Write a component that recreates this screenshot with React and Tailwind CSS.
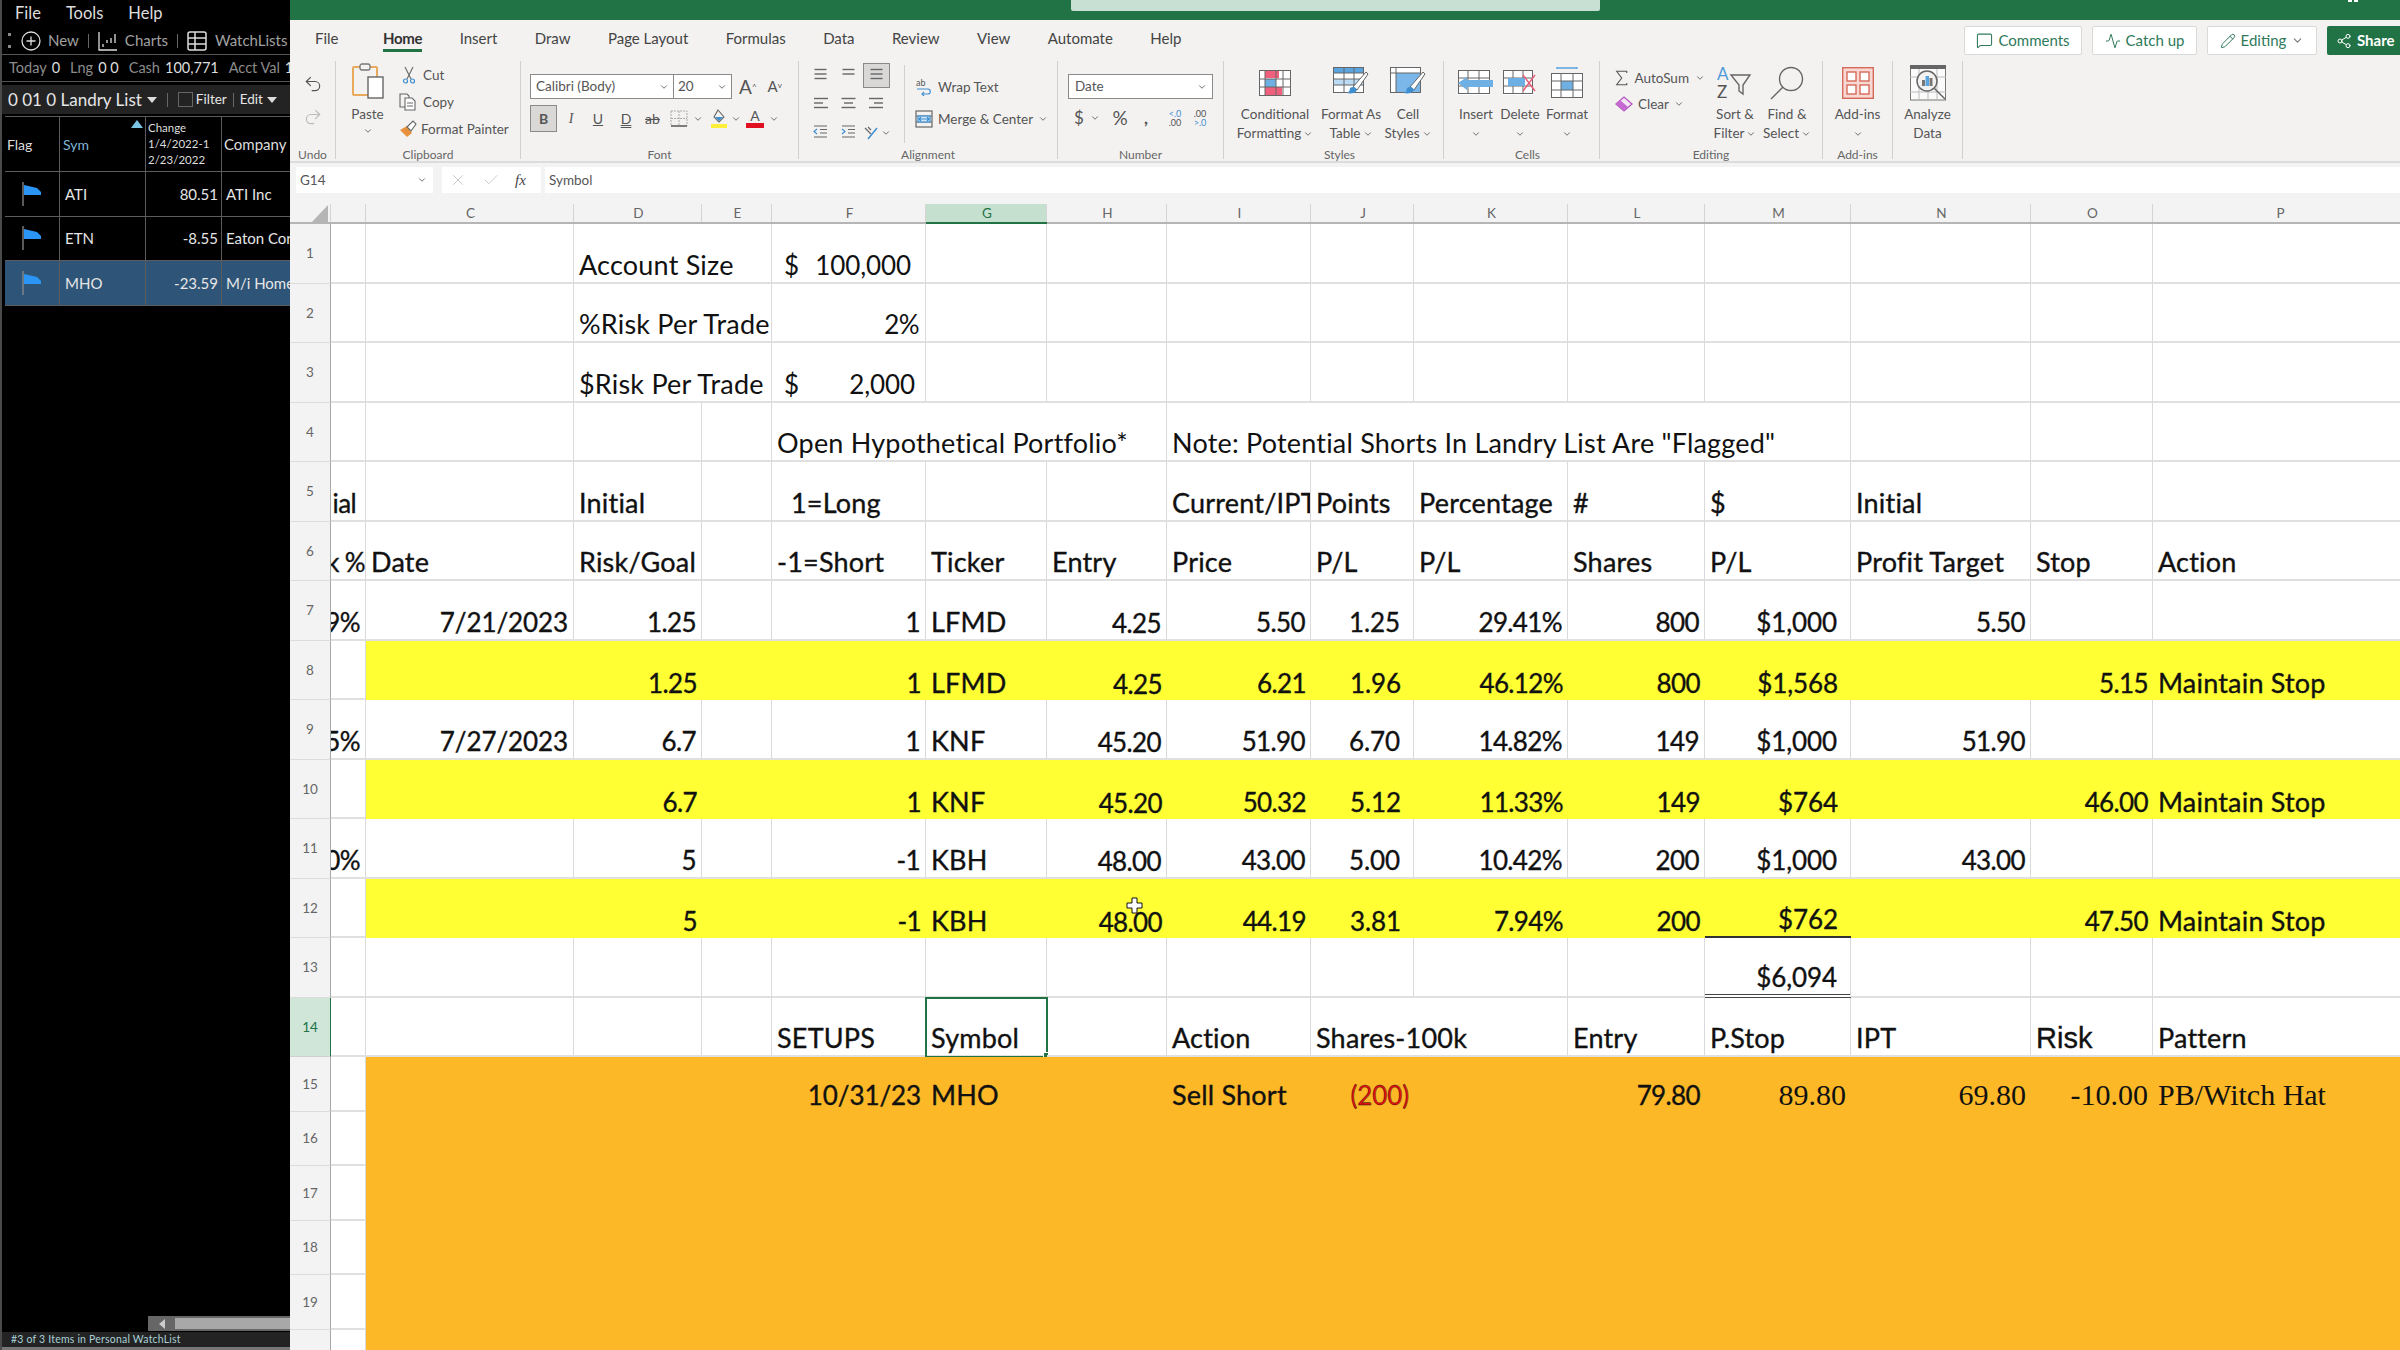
import { ChevronDown, MessageSquare, Activity, Pencil, Share2, Undo2, Redo2, X, Check } from 'lucide-react';

// ---------- sheet data ----------
const COLS = ['B', 'C', 'D', 'E', 'F', 'G', 'H', 'I', 'J', 'K', 'L', 'M', 'N', 'O', 'P'];
const HEADERS = [['C', 'w-[208px]'], ['D', 'w-[128px]'], ['E', 'w-[70px]'], ['F', 'w-[154px]'], ['G', 'w-[121px]'], ['H', 'w-[120px]'], ['I', 'w-[144px]'], ['J', 'w-[103px]'], ['K', 'w-[154px]'], ['L', 'w-[137px]'], ['M', 'w-[146px]'], ['N', 'w-[180px]'], ['O', 'w-[122px]'], ['P', 'w-[254px]']];
const GRID = 'grid grid-cols-[41px_35px_208px_128px_70px_154px_121px_120px_144px_103px_154px_137px_146px_180px_122px_254px]';

const r = (t, extra) => ({ t, right: true, ...extra });
const h = (t) => ({ t, low: true, right: true });
// points and $ columns sit further in from the cell edge
const m = (t, extra) => r(t, { wide: true, cls: 'pr-[13px]', ...extra });

const ROWS = [
    { n: 1, cells: { D: { t: 'Account Size', span: 2, thin: true }, F: { t: '100,000', dollar: true, thin: true, cls: 'pr-[14px] pl-[12px]' } } },
    { n: 2, cells: { D: { t: '%Risk Per Trade', span: 2, thin: true }, F: r('2%', { thin: true, cls: 'pr-[6px]' }) } },
    { n: 3, cells: { D: { t: '$Risk Per Trade', span: 2, thin: true }, F: { t: '2,000', dollar: true, thin: true, cls: 'pr-[10px] pl-[12px]' } } },
    { n: 4, cells: { F: { t: 'Open Hypothetical Portfolio*', span: 3, thin: true }, I: { t: 'Note: Potential Shorts In Landry List Are "Flagged"', span: 5, thin: true } } },
    { n: 5, cells: { B: { t: 'ial', right: true, cls: 'pr-[9px]' }, D: { t: 'Initial' }, F: { t: '1=Long', cls: 'pl-[19px]' }, I: { t: 'Current/IPT', cls: 'overflow-hidden' }, J: { t: 'Points' }, K: { t: 'Percentage' }, L: { t: '#' }, M: { t: '$' }, N: { t: 'Initial' } } },
    { n: 6, cells: { B: { t: 'k %', right: true, cls: 'pr-0' }, C: { t: 'Date' }, D: { t: 'Risk/Goal' }, F: { t: '-1=Short' }, G: { t: 'Ticker' }, H: { t: 'Entry' }, I: { t: 'Price' }, J: { t: 'P/L' }, K: { t: 'P/L' }, L: { t: 'Shares' }, M: { t: 'P/L' }, N: { t: 'Profit Target' }, O: { t: 'Stop' }, P: { t: 'Action' } } },
    { n: 7, cells: { B: r('9%'), C: r('7/21/2023', { wide: true }), D: r('1.25'), F: r('1'), G: { t: 'LFMD' }, H: h('4.25'), I: r('5.50'), J: m('1.25'), K: r('29.41%'), L: r('800'), M: m('$1,000'), N: r('5.50') } },
    { n: 8, fill: 'bg-[#ffff33]', cells: { D: r('1.25'), F: r('1'), G: { t: 'LFMD' }, H: h('4.25'), I: r('6.21'), J: m('1.96'), K: r('46.12%'), L: r('800'), M: m('$1,568'), O: r('5.15'), P: { t: 'Maintain Stop' } } },
    { n: 9, cells: { B: r('5%'), C: r('7/27/2023', { wide: true }), D: r('6.7'), F: r('1'), G: { t: 'KNF' }, H: h('45.20'), I: r('51.90'), J: m('6.70'), K: r('14.82%'), L: r('149'), M: m('$1,000'), N: r('51.90') } },
    { n: 10, fill: 'bg-[#ffff33]', cells: { D: r('6.7'), F: r('1'), G: { t: 'KNF' }, H: h('45.20'), I: r('50.32'), J: m('5.12'), K: r('11.33%'), L: r('149'), M: m('$764'), O: r('46.00'), P: { t: 'Maintain Stop' } } },
    { n: 11, cells: { B: r('0%'), D: r('5'), F: r('-1'), G: { t: 'KBH' }, H: h('48.00'), I: r('43.00'), J: m('5.00'), K: r('10.42%'), L: r('200'), M: m('$1,000'), N: r('43.00') } },
    { n: 12, fill: 'bg-[#ffff33]', cells: { D: r('5'), F: r('-1'), G: { t: 'KBH' }, H: h('48.00'), I: r('44.19'), J: m('3.81'), K: r('7.94%'), L: r('200'), M: m('$762', { cls: 'pr-[13px] border-b-2 !border-b-[#333]' }), O: r('47.50'), P: { t: 'Maintain Stop' } } },
    { n: 13, cells: { M: m('$6,094', { cls: 'pr-[13px] !border-b-[4px] !border-b-[#444] border-double' }) } },
    { n: 14, active: true, cells: { F: { t: 'SETUPS' }, G: { t: 'Symbol', selected: true }, I: { t: 'Action' }, J: { t: 'Shares-100k', span: 2 }, L: { t: 'Entry' }, M: { t: 'P.Stop' }, N: { t: 'IPT' }, O: { t: 'Risk', risk: true }, P: { t: 'Pattern' } } },
    { n: 15, short: true, fill: 'bg-[#fcb827]', cells: { F: r('10/31/23', { wide: true }), G: { t: 'MHO' }, I: { t: 'Sell Short' }, J: r('(200)', { wide: true, cls: 'text-[#e01010]' }), L: r('79.80'), M: r('89.80', { serif: true }), N: r('69.80', { serif: true }), O: r('-10.00', { serif: true }), P: { t: 'PB/Witch Hat', serif: true } } },
    { n: 16, short: true, fill: 'bg-[#fcb827]', cells: {} },
    { n: 17, short: true, fill: 'bg-[#fcb827]', cells: {} },
    { n: 18, short: true, fill: 'bg-[#fcb827]', cells: {} },
    { n: 19, short: true, fill: 'bg-[#fcb827]', cells: {} },
    { n: 20, short: true, fill: 'bg-[#fcb827]', cells: {} },
];

// ---------- ribbon icons ----------
const Chev = ({ className = '' }) => <ChevronDown size={10} strokeWidth={2} className={`text-[#555] shrink-0 ${className}`} />;

const PasteIcon = () => (
    <svg width="34" height="40" viewBox="0 0 34 40">
        <rect x="2" y="5" width="24" height="28" rx="1" fill="#f3f2f1" stroke="#e8a95c" strokeWidth="2" />
        <rect x="9" y="2" width="10" height="6" rx="2" fill="#f3f2f1" stroke="#777" strokeWidth="1.3" />
        <rect x="17" y="15" width="15" height="21" fill="#fff" stroke="#666" strokeWidth="1.4" />
    </svg>
);
const CutIcon = () => (
    <svg width="14" height="18" viewBox="0 0 14 18" fill="none">
        <path d="M3 1l6 12M11 1L5 13" stroke="#666" strokeWidth="1.1" />
        <circle cx="3.5" cy="15" r="2" stroke="#3f8ed0" strokeWidth="1.2" />
        <circle cx="10.5" cy="15" r="2" stroke="#3f8ed0" strokeWidth="1.2" />
    </svg>
);
const CopyIcon = () => (
    <svg width="18" height="18" viewBox="0 0 18 18" fill="none" stroke="#666" strokeWidth="1.1">
        <path d="M1 1h7l2 2v11H1z" fill="#f3f2f1" />
        <path d="M6 5h7l3 3v9H6z" fill="#fff" />
        <path d="M8 10h6M8 13h6" />
    </svg>
);
const PainterIcon = () => (
    <svg width="18" height="18" viewBox="0 0 18 18">
        <path d="M1 10l7-4 5 7-5 4z" fill="#e8913c" />
        <path d="M8 7l6-6 3 3-5 7z" fill="#fff" stroke="#666" strokeWidth="1.1" />
    </svg>
);
const GridLines = ({ w = 32, h = 26, xs = [], ys = [] }) => (
    <g stroke="#666" strokeWidth="1" fill="none">
        <rect x=".5" y=".5" width={w - 1} height={h - 1} />
        {xs.map((x) => <path key={`x${x}`} d={`M${x} 0v${h}`} />)}
        {ys.map((y) => <path key={`y${y}`} d={`M0 ${y}h${w}`} />)}
    </g>
);
const CondIcon = () => (
    <svg width="32" height="26" viewBox="0 0 32 26">
        <rect x="0" y="0" width="32" height="26" fill="#fff" />
        <rect x="6" y="0" width="14" height="8" fill="#f0607c" />
        <rect x="6" y="9" width="11" height="8" fill="#6fb0e4" />
        <rect x="6" y="17" width="17" height="9" fill="#f0607c" />
        <GridLines xs={[6, 17, 24]} ys={[9, 17]} />
    </svg>
);
const Brush = () => (
    <g>
        <path d="M20 20L33 5l2 2-11 16z" fill="#fff" stroke="#666" strokeWidth="1" />
        <path d="M17 21c3-2 6-1 7 2-1 3-6 4-10 3 2-1 3-3 3-5z" fill="#3f8ed0" />
    </g>
);
const TableIcon = () => (
    <svg width="36" height="32" viewBox="0 0 36 32">
        <rect x="0" y="0" width="31" height="26" fill="#fff" />
        <rect x="0" y="0" width="31" height="6" fill="#5aa4e0" />
        <rect x="0" y="12" width="31" height="6" fill="#bcdcf5" />
        <GridLines w={31} xs={[11, 21]} ys={[6, 12, 18]} />
        <Brush />
    </svg>
);
const StylesIcon = () => (
    <svg width="36" height="32" viewBox="0 0 36 32">
        <rect x="0" y="0" width="31" height="26" fill="#fff" />
        <rect x="6" y="6" width="25" height="20" fill="#7cb7ea" />
        <GridLines w={31} xs={[6]} ys={[6]} />
        <Brush />
    </svg>
);
const InsertIcon = () => (
    <svg width="36" height="26" viewBox="0 0 36 26">
        <rect x="0" y="1" width="32" height="24" fill="#fff" />
        <GridLines w={32} h={24} xs={[10, 21]} ys={[8, 16]} />
        <path d="M0 13l9-6v3h26v7H9v3z" fill="#6fb0e4" />
    </svg>
);
const DeleteIcon = () => (
    <svg width="34" height="26" viewBox="0 0 34 26">
        <rect x="0" y="1" width="30" height="24" fill="#fff" />
        <GridLines w={30} h={24} xs={[10, 20]} ys={[8, 16]} />
        <rect x="5" y="8" width="17" height="8" fill="#6fb0e4" />
        <path d="M20 5l12 16M32 5L20 21" stroke="#e7607a" strokeWidth="1.5" />
    </svg>
);
const FormatIcon = () => (
    <svg width="32" height="32" viewBox="0 0 32 32">
        <path d="M6 1h20M6 0v2M26 0v2" stroke="#5aa4e0" strokeWidth="1.3" />
        <g transform="translate(0 6)">
            <rect width="32" height="25" fill="#fff" />
            <rect x="10" y="8" width="12" height="9" fill="#6fb0e4" />
            <GridLines h={25} xs={[10, 22]} ys={[8, 17]} />
        </g>
    </svg>
);
const SortIcon = () => (
    <svg width="36" height="34" viewBox="0 0 36 34">
        <text x="0" y="14" fontSize="17" fill="#4f9bd9" fontFamily="Lato">A</text>
        <text x="0" y="32" fontSize="17" fill="#555" fontFamily="Lato">Z</text>
        <path d="M14 9h19l-7 10v9l-4-3v-6z" fill="none" stroke="#666" strokeWidth="1.4" />
    </svg>
);
const FindIcon = () => (
    <svg width="34" height="34" viewBox="0 0 34 34" fill="none" stroke="#666" strokeWidth="1.4">
        <circle cx="21" cy="13" r="11.5" />
        <path d="M13 21L1 33" />
    </svg>
);
const AddInsIcon = () => (
    <svg width="32" height="32" viewBox="0 0 32 32" fill="#fff" stroke="#d6695a" strokeWidth="1.4">
        <rect x=".7" y=".7" width="30.6" height="30.6" fill="#f7d8d2" />
        <rect x="5" y="5" width="9" height="9" />
        <rect x="18" y="5" width="9" height="9" />
        <rect x="5" y="18" width="9" height="9" />
        <rect x="18" y="18" width="9" height="9" />
    </svg>
);
const AnalyzeIcon = () => (
    <svg width="36" height="36" viewBox="0 0 36 36" fill="none">
        <rect x=".5" y="3" width="35" height="32" fill="#fbfbfb" stroke="#777" />
        <rect x="0" y="0" width="36" height="4" fill="#666" />
        <path d="M0 12h36M0 27h36M9 4v31M27 4v31M18 26v9" stroke="#bbb" />
        <circle cx="17" cy="16" r="10" fill="#f3f2f1" stroke="#666" strokeWidth="1.5" />
        <path d="M24 23l11 11" stroke="#666" strokeWidth="1.5" />
        <rect x="12" y="15" width="3" height="6" fill="#777" />
        <rect x="15.5" y="11" width="3.5" height="10" fill="#5aa4e0" />
        <rect x="19.5" y="13" width="3" height="8" fill="#777" />
    </svg>
);
const SumIcon = () => (
    <svg width="16" height="18" viewBox="0 0 16 18" fill="none" stroke="#555" strokeWidth="1.3"><path d="M14 3V1H2l6 8-6 8h12v-2" /></svg>
);
const EraserIcon = () => (
    <svg width="18" height="16" viewBox="0 0 18 16"><path d="M1 8l8-7 8 7-8 7z" fill="#f3e6f5" stroke="#b354c0" strokeWidth="1.3" /><path d="M1 8l4-4 8 7-4 4z" fill="#c56ad0" /></svg>
);
const AlignH = ({ widths = [12, 8, 12], align = 'left', color = '#666' }) => (
    <svg width="15" height="13" viewBox="0 0 15 13" stroke={color} strokeWidth="1.4">
        {widths.map((w, i) => {
            const x = align === 'left' ? 1 : align === 'right' ? 14 - w : (15 - w) / 2;
            return <path key={i} d={`M${x} ${1.5 + i * 4.5}h${w}`} />;
        })}
    </svg>
);
const IndentIcon = ({ flip }) => (
    <svg width="15" height="13" viewBox="0 0 15 13" stroke="#666" strokeWidth="1.2">
        <path d="M1 1h13M1 12h13M7 4.5h7M7 8h7" />
        <path d={flip ? 'M1 4l3 2.5L1 9' : 'M4 4L1 6.5 4 9'} stroke="#3f8ed0" fill="none" />
    </svg>
);
const OrientIcon = () => (
    <svg width="16" height="16" viewBox="0 0 16 16" fill="none" stroke="#666" strokeWidth="1.2">
        <path d="M2 3l6 6M5 2l3 3" />
        <path d="M14 3L5 14" stroke="#3f8ed0" strokeWidth="1.5" />
    </svg>
);
const WrapIcon = () => (
    <svg width="18" height="18" viewBox="0 0 18 18" fill="none">
        <text x="1" y="8" fontSize="9" fill="#555" fontFamily="Lato">ab</text>
        <path d="M2 11h11c3 0 3 5 0 5H7" stroke="#3f8ed0" strokeWidth="1.2" />
        <path d="M9 14l-2 2 2 2" stroke="#3f8ed0" strokeWidth="1.2" />
    </svg>
);
const MergeIcon = () => (
    <svg width="18" height="18" viewBox="0 0 18 18" fill="none" stroke="#3f8ed0" strokeWidth="1.2">
        <rect x="1" y="1" width="16" height="16" stroke="#666" />
        <path d="M1 6h16M1 12h16" stroke="#666" />
        <rect x="3" y="6" width="12" height="6" fill="#cfe4f6" />
        <path d="M4 9h10M6 7L4 9l2 2M12 7l2 2-2 2" />
    </svg>
);
const BorderIcon = () => (
    <svg width="18" height="17" viewBox="0 0 18 17" fill="none">
        <path d="M1 1h16v15H1zM9 1v15M1 8.5h16" stroke="#aaa" strokeDasharray="2 1" />
        <path d="M1 16h16" stroke="#555" strokeWidth="1.4" />
    </svg>
);
const FillIcon = () => (
    <svg width="16" height="19" viewBox="0 0 16 19">
        <path d="M7 1l6 7-5 5-5-5z" fill="none" stroke="#666" strokeWidth="1.1" />
        <path d="M4 8h8l-4 4z" fill="#3f8ed0" />
        <rect x="0" y="15" width="16" height="4" fill="#ffef3a" />
    </svg>
);

// ---------- ribbon pieces ----------
const Group = ({ className, label, children }) => (
    <div className={`h-[98px] border-r border-[#d2d0ce] shrink-0 ${className}`}>
        <div className="h-[87px] flex">{children}</div>
        <div className="h-[12px] leading-[14px] text-[12px] text-center text-[#666]">{label}</div>
    </div>
);

const LargeBtn = ({ className, icon, lines, caret = true, iconBox = 'h-[44px]' }) => (
    <div className={`flex flex-col items-center shrink-0 text-[13.5px] leading-[19px] text-[#555] whitespace-nowrap ${className}`}>
        <div className={`${iconBox} flex items-center justify-center`}>{icon}</div>
        {lines.map((l, i) => (
            <span key={l} className="flex items-center gap-[2px]">
                {l}
                {caret && lines.length === 2 && i === 1 && <Chev />}
            </span>
        ))}
        {caret && lines.length === 1 && <span className="h-[19px] flex items-center"><Chev /></span>}
    </div>
);

const Tabs = ['Home', 'Insert', 'Draw', 'Page Layout', 'Formulas', 'Data', 'Review', 'View', 'Automate', 'Help'];

const TopBtn = ({ icon, label, className = '', children }) => (
    <div className={`h-[29px] flex items-center justify-center gap-[5px] bg-white border border-[#d9d9d9] rounded-[2px] text-[#2f7a5a] text-[15px] ${className}`}>
        {icon}
        <span>{label}</span>
        {children}
    </div>
);

const Ribbon = () => (
    <div className="bg-[#f3f2f1] h-[143px] border-b-2 border-[#dcdcdc] font-['Lato',sans-serif]">
        <div className="h-[40px] flex items-start">
            <div className="flex gap-[37.4px] pl-[25px] text-[15px] text-[#444] leading-[36px]">
                <span className="mr-[7px]">File</span>
                {Tabs.map((t) => (
                    <span key={t} className={t === 'Home' ? 'relative font-bold text-[#333] tracking-[-0.3px]' : ''}>
                        {t}
                        {t === 'Home' && <span className="absolute left-0 right-0 top-[29px] h-[3px] bg-[#217346]" />}
                    </span>
                ))}
            </div>
            <div className="ml-auto flex gap-[10px] pt-[6px]">
                <TopBtn className="w-[118px]" label="Comments" icon={<MessageSquare size={17} strokeWidth={1.5} />} />
                <TopBtn className="w-[105px]" label="Catch up" icon={<Activity size={16} strokeWidth={1.5} />} />
                <TopBtn className="w-[110px]" label="Editing" icon={<Pencil size={16} strokeWidth={1.5} />}>
                    <ChevronDown size={13} className="text-[#777]" />
                </TopBtn>
                <div className="w-[73px] h-[29px] flex items-center gap-[5px] pl-[9px] bg-[#217346] rounded-l-[2px] text-white text-[15px] font-bold">
                    <Share2 size={16} strokeWidth={1.5} />
                    <span>Share</span>
                </div>
            </div>
        </div>
        <div className="flex pt-px">
            <Group className="w-[46px]" label="Undo">
                <div className="w-full flex flex-col items-center pt-[13px] gap-[13px]">
                    <Undo2 size={20} strokeWidth={1.4} className="text-[#555]" />
                    <Redo2 size={20} strokeWidth={1.4} className="text-[#bbb]" />
                </div>
            </Group>
            <Group className="w-[185px]" label="Clipboard">
                <div className="w-[63px] flex flex-col items-center pt-[1px] text-[13.5px] text-[#555]">
                    <PasteIcon />
                    <span className="mt-[3px] leading-[19px]">Paste</span>
                    <Chev className="mt-[2px]" />
                </div>
                <div className="flex flex-col pt-[4px] gap-[7px] text-[13.5px] text-[#555] whitespace-nowrap">
                    <span className="flex items-center gap-[7px] h-[20px] pl-[3px]"><CutIcon />Cut</span>
                    <span className="flex items-center gap-[6px] h-[20px]"><CopyIcon />Copy</span>
                    <span className="flex items-center gap-[4px] h-[20px]"><PainterIcon />Format Painter</span>
                </div>
            </Group>
            <Group className="w-[278px]" label="Font">
                <div className="pl-[9px] pt-[13px] flex flex-col gap-[6px]">
                    <div className="flex items-center gap-[7px]">
                        <div className="w-[202px] h-[25px] flex bg-white border border-[#8a8a8a] text-[13.5px] text-[#555]">
                            <div className="w-[143px] flex items-center justify-between pl-[5px] pr-[4px] border-r border-[#8a8a8a]">Calibri (Body)<Chev /></div>
                            <div className="flex-1 flex items-center justify-between pl-[4px] pr-[4px]">20<Chev /></div>
                        </div>
                        <span className="text-[19px] text-[#555] leading-none">A<sup className="text-[8px]">^</sup></span>
                        <span className="ml-[4px] text-[15px] text-[#555] leading-none">A<sup className="text-[8px]">v</sup></span>
                    </div>
                    <div className="flex items-center text-[14px] text-[#555]">
                        <span className="w-[27px] h-[27px] flex items-center justify-center bg-[#d9d8d7] border border-[#8a8a8a] font-bold">B</span>
                        <span className="w-[26px] ml-[1px] text-center italic font-['Liberation_Serif']">I</span>
                        <span className="w-[28px] text-center underline">U</span>
                        <span className="w-[28px] text-center underline decoration-double">D</span>
                        <span className="w-[25px] text-center line-through">ab</span>
                        <span className="w-[28px] flex justify-center"><BorderIcon /></span>
                        <Chev />
                        <span className="w-[28px] pl-[4px] flex justify-center"><FillIcon /></span>
                        <Chev />
                        <span className="w-[28px] flex flex-col items-center leading-[14px]">A<span className="w-[18px] h-[5px] bg-[#e01020]" /></span>
                        <Chev />
                    </div>
                </div>
            </Group>
            <Group className="w-[259px]" label="Alignment">
                <div className="w-[105px] pl-[14px] pt-[5px] grid grid-cols-[15px_15px_15px] gap-x-[13px] gap-y-[15px] content-start justify-items-center">
                    <span className="h-[16px] flex items-center"><AlignH widths={[12, 12, 12]} align="center" /></span>
                    <span className="h-[16px] flex items-center"><AlignH widths={[12, 12]} align="center" /></span>
                    <span className="h-[16px] flex items-center relative"><span className="absolute -left-[6px] -top-[3px] w-[27px] h-[25px] bg-[#d9d8d7] border border-[#8a8a8a]" /><span className="relative"><AlignH widths={[12, 12, 12]} align="center" /></span></span>
                    <AlignH widths={[14, 9, 14]} />
                    <AlignH widths={[14, 9, 14]} align="center" />
                    <AlignH widths={[14, 9, 14]} align="right" />
                    <IndentIcon />
                    <IndentIcon flip />
                    <span className="flex items-center gap-[2px]"><OrientIcon /><Chev /></span>
                </div>
                <div className="h-[78px] mt-[4px] border-l border-[#d2d0ce] pl-[10px] pt-[12px] flex flex-col gap-[12px] text-[13.5px] text-[#555] whitespace-nowrap">
                    <span className="flex items-center gap-[5px] h-[20px]"><WrapIcon />Wrap Text</span>
                    <span className="flex items-center gap-[5px] h-[20px]"><MergeIcon />Merge &amp; Center<Chev /></span>
                </div>
            </Group>
            <Group className="w-[166px]" label="Number">
                <div className="pl-[10px] pt-[13px] flex flex-col gap-[8px]">
                    <div className="w-[145px] h-[25px] flex items-center justify-between pl-[6px] pr-[5px] bg-white border border-[#8a8a8a] text-[13.5px] text-[#555]">Date<Chev /></div>
                    <div className="flex items-center text-[#555] text-[17px] leading-[22px]">
                        <span className="w-[22px] text-center">$</span>
                        <Chev />
                        <span className="w-[40px] text-center text-[19px]">%</span>
                        <span className="w-[12px] text-center font-bold">,</span>
                        <span className="w-[28px] ml-[9px] text-center text-[9px] leading-[9px] text-[#3f8ed0]">&lt;.0<br /><span className="text-[#555]">.00</span></span>
                        <span className="w-[22px] text-center text-[9px] leading-[9px]">.00<br /><span className="text-[#3f8ed0]">&gt;.0</span></span>
                    </div>
                </div>
            </Group>
            <Group className="w-[220px] pl-[12px]" label="Styles">
                <LargeBtn className="w-[78px]" icon={<CondIcon />} lines={['Conditional', 'Formatting']} />
                <LargeBtn className="w-[74px]" icon={<TableIcon />} lines={['Format As', 'Table']} />
                <LargeBtn className="w-[40px]" icon={<StylesIcon />} lines={['Cell', 'Styles']} />
            </Group>
            <Group className="w-[156px] pl-[12px]" label="Cells">
                <LargeBtn className="w-[40px]" icon={<InsertIcon />} lines={['Insert']} />
                <LargeBtn className="w-[48px]" icon={<DeleteIcon />} lines={['Delete']} />
                <LargeBtn className="w-[46px]" icon={<FormatIcon />} lines={['Format']} />
            </Group>
            <Group className="w-[223px]" label="Editing">
                <div className="w-[105px] pl-[15px] pt-[7px] flex flex-col gap-[6px] text-[13.5px] text-[#555] whitespace-nowrap">
                    <span className="flex items-center gap-[6px] h-[20px]"><SumIcon />AutoSum<Chev /></span>
                    <span className="flex items-center gap-[5px] h-[20px]"><EraserIcon />Clear<Chev /></span>
                </div>
                <LargeBtn className="w-[60px]" icon={<SortIcon />} lines={['Sort &', 'Filter']} />
                <LargeBtn className="w-[44px]" icon={<FindIcon />} lines={['Find &', 'Select']} />
            </Group>
            <Group className="w-[70px]" label="Add-ins">
                <LargeBtn className="w-full" icon={<AddInsIcon />} lines={['Add-ins']} />
            </Group>
            <Group className="w-[70px]" label="">
                <LargeBtn className="w-full" icon={<AnalyzeIcon />} lines={['Analyze', 'Data']} caret={false} />
            </Group>
        </div>
    </div>
);

const FormulaBar = () => (
    <div className="h-[41px] bg-[#f3f3f3] pt-[4px] pl-[6px] flex gap-[9px] font-['Lato',sans-serif] text-[13.5px] text-[#555]">
        <div className="w-[137px] h-[26px] bg-white flex items-center justify-between pl-[4px] pr-[6px]">G14<Chev /></div>
        <div className="flex gap-[4px]">
            <div className="w-[99px] h-[26px] bg-white flex items-center gap-[15px] pl-[7px]">
                <X size={18} strokeWidth={1} className="text-[#bbb]" />
                <Check size={18} strokeWidth={1} className="text-[#bbb]" />
                <span className="italic font-['Liberation_Serif'] text-[15px] text-[#444]">fx</span>
            </div>
            <div className="w-[1855px] h-[26px] bg-white flex items-center pl-[4px]">Symbol</div>
        </div>
    </div>
);

// ---------- sheet ----------
const cellType = (cell) => {
    if (!cell) return 'text-[26px]';
    if (cell.serif) return "font-['Liberation_Serif',serif] text-[30px]";
    if (cell.risk) return "font-['Liberation_Sans',sans-serif] text-[29px]";
    if (cell.dollar) return 'text-[26px] tracking-[-0.1px]';
    if (cell.right) return `text-[26px] ${cell.wide ? 'tracking-[-0.1px]' : 'tracking-[-0.62px]'}`;
    return 'text-[27px] tracking-[0.2px]';
};

const Cell = ({ col, cell, row }) => {
    const fillable = col !== 'B' && row.fill;
    const lines = fillable ? row.fill : 'border-r border-b-2 border-r-[#dadada] border-b-[#e0e0e0]';
    const stroke = cell?.thin || cell?.serif ? '' : '[-webkit-text-stroke:0.35px_#111]';
    const lead = cell?.low ? 'leading-[32px]' : 'leading-[34px]';
    return (
        <div
            className={`relative flex items-end whitespace-nowrap text-[#111] px-[5px] ${col === 'B' ? 'overflow-hidden' : ''} ${lines} ${lead} ${cell?.right ? 'justify-end' : ''} ${cell?.dollar ? 'justify-between' : ''} ${cellType(cell)} ${stroke} ${cell?.cls ?? ''} ${cell?.selected ? 'outline-2 -outline-offset-1 outline-[#217346]' : ''}`}
            style={cell?.span ? { gridColumn: `span ${cell.span}` } : undefined}
        >
            {cell?.dollar && <span>$</span>}
            {cell?.t && <span>{cell.t}</span>}
            {cell?.selected && <span className="absolute -right-[3px] -bottom-[3px] w-[6px] h-[6px] bg-[#217346] border border-white" />}
        </div>
    );
};

const SheetRow = ({ row }) => {
    const out = [];
    let skip = 0;
    COLS.forEach((col) => {
        if (skip > 0) { skip -= 1; return; }
        const cell = row.cells[col];
        if (cell?.span) skip = cell.span - 1;
        out.push(<Cell key={col} col={col} cell={cell} row={row} />);
    });
    return (
        <div className={`${GRID} ${row.short ? 'h-[54.5px]' : 'h-[59.5px]'}`}>
            <div className={`flex items-center justify-center text-[13.5px] border-r border-b ${row.active ? 'bg-[#cfe6d9] text-[#217346] border-r-[#217346] border-b-[#d0d0d0]' : 'bg-[#f3f3f3] text-[#666] border-r-[#a8a8a8] border-b-[#dcdcdc]'}`}>{row.n}</div>
            {out}
        </div>
    );
};

const ColumnHeader = () => (
    <div className="h-[20px] flex bg-[#f3f3f3] border-b-2 border-[#b5b5b5] text-[13.5px] text-[#666] font-['Lato',sans-serif]">
        <div className="w-[41px] shrink-0 flex justify-end items-end pr-[2px] border-r border-[#d4d4d4]">
            <span className="w-0 h-0 border-l-[16px] border-l-transparent border-b-[17px] border-b-[#b5b5b5]" />
        </div>
        <div className="w-[35px] shrink-0 border-r border-[#d4d4d4]" />
        {HEADERS.map(([c, w]) => (
            <div key={c} className={`${w} shrink-0 flex items-center justify-center pl-[2px] border-r border-[#d4d4d4] ${c === 'G' ? 'bg-[#c6e0d0] text-[#217346] shadow-[0_2px_0_#217346]' : ''}`}>{c}</div>
        ))}
    </div>
);

const Excel = () => (
    <main className="relative w-[2110px] h-full overflow-hidden bg-white">
        <div className="h-[20px] flex items-start bg-[#217346]">
            <div className="ml-[781px] w-[529px] h-[11px] bg-[#c8e0d3] rounded-b-[2px]" />
            <div className="ml-auto mr-[42px] flex gap-[2px]">
                <span className="w-[4px] h-[2px] bg-white" />
                <span className="w-[4px] h-[2px] bg-white" />
            </div>
        </div>
        <Ribbon />
        <FormulaBar />
        <ColumnHeader />
        <div className="font-['Lato',sans-serif]">
            {ROWS.map((row) => <SheetRow key={row.n} row={row} />)}
        </div>
        {/* mouse pointer over H12 */}
        <svg className="absolute left-[836px] top-[897px]" width="17" height="17" viewBox="0 0 17 17">
            <path d="M6 1h5v5h5v5h-5v5H6v-5H1V6h5z" fill="#fff" stroke="#111" strokeWidth="1" />
        </svg>
    </main>
);

// ---------- left panel ----------
const Flag = () => (
    <svg width="20" height="24" viewBox="0 0 20 24">
        <path d="M1 0v24" stroke="#8a8a8a" strokeWidth="1.3" />
        <path d="M2 3l13 3 4 4v3H2z" fill="#2a95f5" />
    </svg>
);

const Stat = ({ label, value }) => (
    <span className="flex items-center gap-[5px]"><span className="text-[#8c8c8c]">{label}</span><span className="text-[#ddd]">{value}</span></span>
);

const WATCH = [
    { sym: 'ATI', chg: '80.51', co: 'ATI Inc' },
    { sym: 'ETN', chg: '-8.55', co: 'Eaton Cor' },
    { sym: 'MHO', chg: '-23.59', co: 'M/i Homes', on: true },
];

const WatchRow = ({ sym, chg, co, on }) => (
    <div className={`ml-[3px] grid grid-cols-[55px_86px_76px_68px] h-[44.5px] border-b border-[#5c5c5c] text-[15px] text-[#e6e6e6] ${on ? 'bg-[#2e5477]' : ''}`}>
        <div className="flex items-center justify-center border-r border-[#5c5c5c]"><Flag /></div>
        <div className="flex items-center pl-[5px] border-r border-[#5c5c5c]">{sym}</div>
        <div className="flex items-center justify-end pr-[3px] border-r border-[#5c5c5c]">{chg}</div>
        <div className="flex items-center pl-[4px] whitespace-nowrap overflow-hidden">{co}</div>
    </div>
);

const Panel = () => (
    <aside className="w-[290px] h-full shrink-0 flex flex-col bg-black border-l-[2px] border-[#4a4a4a] overflow-hidden font-['Lato',sans-serif] text-[#ddd]">
        <div className="h-[27px] flex items-center gap-[25px] pl-[13px] text-[16.5px]">
            <span>File</span><span>Tools</span><span>Help</span>
        </div>
        <div className="h-[28px] flex items-center pl-[6px] border-b border-[#555] text-[15px] text-[#a0a0a0] whitespace-nowrap">
            <span className="w-[3px] h-[15px] border-y-[3px] border-[#888] mr-[10px]" />
            <svg width="20" height="20" viewBox="0 0 20 20" fill="none" stroke="#ddd" strokeWidth="1.3"><circle cx="10" cy="10" r="9" /><path d="M10 5.5v9M5.5 10h9" /></svg>
            <span className="ml-[7px]">New</span>
            <span className="w-px h-[14px] bg-[#666] mx-[9px]" />
            <svg width="20" height="20" viewBox="0 0 20 20" fill="none" stroke="#ddd" strokeWidth="1.3"><path d="M1 1v18h18" /><path d="M5 13v3M9 9v3M13 7v5M17 3v9" /></svg>
            <span className="ml-[7px]">Charts</span>
            <span className="w-px h-[14px] bg-[#666] mx-[9px]" />
            <svg width="20" height="20" viewBox="0 0 20 20" fill="none" stroke="#ddd" strokeWidth="1.5"><rect x="1" y="1" width="18" height="18" rx="2" /><path d="M1 7h18M1 13h18M8 1v18" /></svg>
            <span className="ml-[8px]">WatchLists</span>
        </div>
        <div className="h-[27px] flex items-center gap-[10px] pl-[7px] border-b border-[#555] text-[14.5px] whitespace-nowrap">
            <Stat label="Today" value="0" />
            <Stat label="Lng" value="0 0" />
            <Stat label="Cash" value="100,771" />
            <Stat label="Acct Val" value="100" />
        </div>
        <div className="h-[29px] mt-[3px] flex items-center pl-[6px] bg-[#232323] text-[17px] text-[#e6e6e6] whitespace-nowrap">
            <span>0 01 0 Landry List</span>
            <span className="ml-[5px] w-0 h-0 border-x-[5px] border-x-transparent border-t-[6px] border-t-[#ddd]" />
            <span className="w-px h-[14px] bg-[#666] mx-[10px]" />
            <span className="w-[15px] h-[15px] border border-[#666] mr-[3px]" />
            <span className="text-[13.5px]">Filter</span>
            <span className="w-px h-[14px] bg-[#666] mx-[6px]" />
            <span className="text-[13.5px]">Edit</span>
            <span className="ml-[4px] w-0 h-0 border-x-[5px] border-x-transparent border-t-[6px] border-t-[#ddd]" />
        </div>
        <div className="ml-[3px] mt-[2px] grid grid-cols-[55px_86px_76px_68px] h-[56px] border-y border-[#5c5c5c] text-[14px]">
            <div className="flex items-center pl-[2px] border-r border-[#5c5c5c]">Flag</div>
            <div className="relative flex items-center pl-[3px] border-r border-[#5c5c5c] text-[#7fb5d6]">
                Sym
                <span className="absolute right-[2px] top-[3px] w-0 h-0 border-x-[6px] border-x-transparent border-b-[8px] border-b-[#7cc4e4]" />
            </div>
            <div className="flex flex-col justify-center pl-[2px] border-r border-[#5c5c5c] text-[11.5px] leading-[16px] whitespace-nowrap overflow-hidden">
                <span>Change</span><span>1/4/2022-1</span><span>2/23/2022</span>
            </div>
            <div className="flex items-center pl-[2px] text-[15px]">Company</div>
        </div>
        {WATCH.map((w) => <WatchRow key={w.sym} {...w} />)}
        <div className="flex-1" />
        <div className="h-[15px] ml-[146px] flex bg-[#666]">
            <span className="w-[27px] flex items-center justify-center">
                <span className="w-0 h-0 border-y-[5px] border-y-transparent border-r-[6px] border-r-[#ccc]" />
            </span>
            <span className="flex-1 my-[2px] bg-[#a8a8a8]" />
        </div>
        <div className="h-[15px] mt-px flex items-center pl-[9px] bg-[#232323] text-[10.5px] tracking-[0.2px] text-[#a8d0d8] whitespace-nowrap">#3 of 3 Items in Personal WatchList</div>
        <div className="h-[3px] bg-[#777]" />
    </aside>
);

export default function App() {
    return (
        <div className="w-[2400px] h-[1350px] flex overflow-hidden">
            <Panel />
            <Excel />
        </div>
    );
}
